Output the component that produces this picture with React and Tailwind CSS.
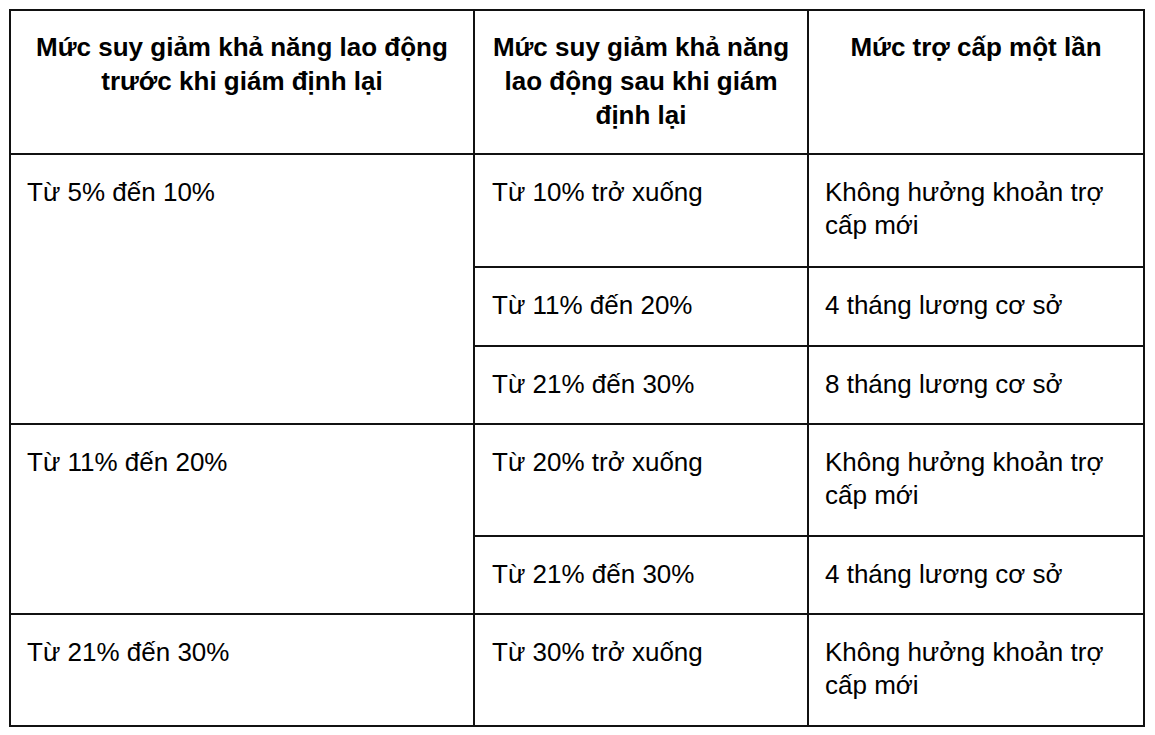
const header = [
  'Mức suy giảm khả năng lao động trước khi giám định lại',
  'Mức suy giảm khả năng lao động sau khi giám định lại',
  'Mức trợ cấp một lần',
];

const groups = [
  {
    before: 'Từ 5% đến 10%',
    rows: [
      ['Từ 10% trở xuống', 'Không hưởng khoản trợ cấp mới'],
      ['Từ 11% đến 20%', '4 tháng lương cơ sở'],
      ['Từ 21% đến 30%', '8 tháng lương cơ sở'],
    ],
    span: 'row-span-3',
  },
  {
    before: 'Từ 11% đến 20%',
    rows: [
      ['Từ 20% trở xuống', 'Không hưởng khoản trợ cấp mới'],
      ['Từ 21% đến 30%', '4 tháng lương cơ sở'],
    ],
    span: 'row-span-2',
  },
  {
    before: 'Từ 21% đến 30%',
    rows: [['Từ 30% trở xuống', 'Không hưởng khoản trợ cấp mới']],
    span: 'row-span-1',
  },
];

function Cell({ children, className = '' }) {
  return <div className={`bg-white ${className}`}>{children}</div>;
}

export default function App() {
  return (
    <div className="min-h-screen bg-white pl-[9px] pt-[9px] text-black" style={{ fontFamily: '"Liberation Sans", Arial, sans-serif' }}>
      <div className="grid w-[1136px] grid-cols-[462px_332px_334px] grid-rows-[142px_111px_77px_76px_110px_76px_110px] gap-[2px] bg-[#111] p-[2px] text-[26px] leading-[33px]">
        {header.map((h) => (
          <Cell key={h} className="px-[10px] pt-[19px] text-center font-bold leading-[34px]">
            {h}
          </Cell>
        ))}
        {groups.map((g) => (
          <>
            <Cell key={g.before} className={`pl-[16px] pr-[18px] pt-[21px] ${g.span}`}>
              {g.before}
            </Cell>
            {g.rows.map((r, i) => (
              <>
                <Cell key={`${g.before}-a${i}`} className="pl-[17px] pr-[18px] pt-[21px]">{r[0]}</Cell>
                <Cell key={`${g.before}-b${i}`} className="pl-[16px] pr-[18px] pt-[21px]">{r[1]}</Cell>
              </>
            ))}
          </>
        ))}
      </div>
    </div>
  );
}
